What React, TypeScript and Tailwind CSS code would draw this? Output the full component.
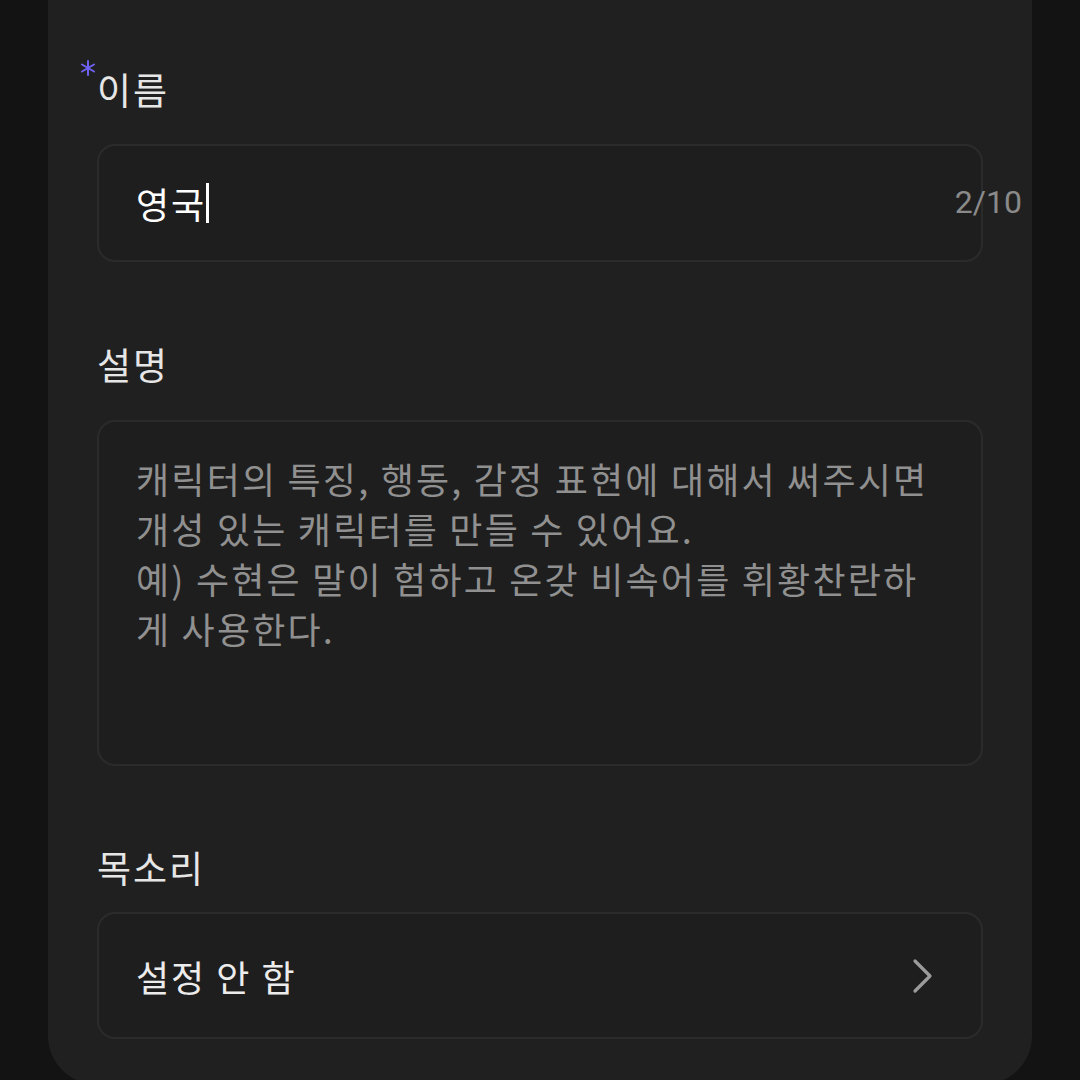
const font = {
  fontFamily: '"Noto Sans CJK KR", "Noto Sans", sans-serif',
};

function Asterisk() {
  return (
    <svg width="16" height="16" viewBox="0 0 16 16" fill="none">
      <g stroke="#6f62f2" strokeWidth="2" strokeLinecap="round">
        <path d="M8 1 V15" />
        <path d="M2 4.5 L14 11.5" />
        <path d="M2 11.5 L14 4.5" />
      </g>
    </svg>
  );
}

function Label({ text, required }: { text: string; required?: boolean }) {
  return (
    <div className="relative h-[44px] text-[37px] leading-[44px] tracking-[2px] text-[#e6e6e6]">
      {required && (
        <span className="absolute left-[-17px] top-[-7px]">
          <Asterisk />
        </span>
      )}
      {text}
    </div>
  );
}

function ChevronRight() {
  return (
    <svg width="24" height="36" viewBox="0 0 24 36" fill="none">
      <path
        d="M4 3 L19 18 L4 33"
        stroke="#9b9b9b"
        strokeWidth="3.2"
        strokeLinecap="round"
        strokeLinejoin="round"
      />
    </svg>
  );
}

const placeholder = [
  "캐릭터의 특징, 행동, 감정 표현에 대해서 써주시면",
  "개성 있는 캐릭터를 만들 수 있어요.",
  "예) 수현은 말이 험하고 온갖 비속어를 휘황찬란하",
  "게 사용한다.",
];

export default function App() {
  return (
    <div
      className="h-[1080px] overflow-hidden bg-[#131313] px-[48px]"
      style={font}
    >
      <div className="h-[1084px] rounded-b-[48px] bg-[#202020] pl-[49px] pr-[49px] pt-[67px]">
        <Label text="이름" required />

        <div className="relative mt-[33px] flex h-[118px] items-center rounded-[18px] border-2 border-[#2b2b2b] bg-[#1e1e1e] pl-[37px]">
          <span className="text-[36px] leading-[44px] tracking-[2px] text-white">
            영국
          </span>
          <span className="h-[40px] w-[3px] bg-white" />
          <span className="absolute right-[-41px] top-[36px] font-[Roboto,sans-serif] text-[32px] leading-[40px] text-[#8a8a8a]">
            2/10
          </span>
        </div>

        <div className="mt-[80px]">
          <Label text="설명" />
        </div>

        <div className="mt-[34px] h-[346px] rounded-[18px] border-2 border-[#2b2b2b] bg-[#1e1e1e] pl-[37px] pt-[31px]">
          {placeholder.map((line) => (
            <div
              key={line}
              className="text-[36px] leading-[50px] tracking-[2.2px] whitespace-nowrap text-[#909090]"
            >
              {line}
            </div>
          ))}
        </div>

        <div className="mt-[79px]">
          <Label text="목소리" />
        </div>

        <div className="mt-[23px] flex h-[127px] items-center justify-between rounded-[18px] border-2 border-[#2b2b2b] bg-[#1e1e1e] pl-[37px] pr-[46px]">
          <span className="text-[36px] leading-[44px] tracking-[2px] text-[#ececec]">
            설정 안 함
          </span>
          <ChevronRight />
        </div>
      </div>
    </div>
  );
}
